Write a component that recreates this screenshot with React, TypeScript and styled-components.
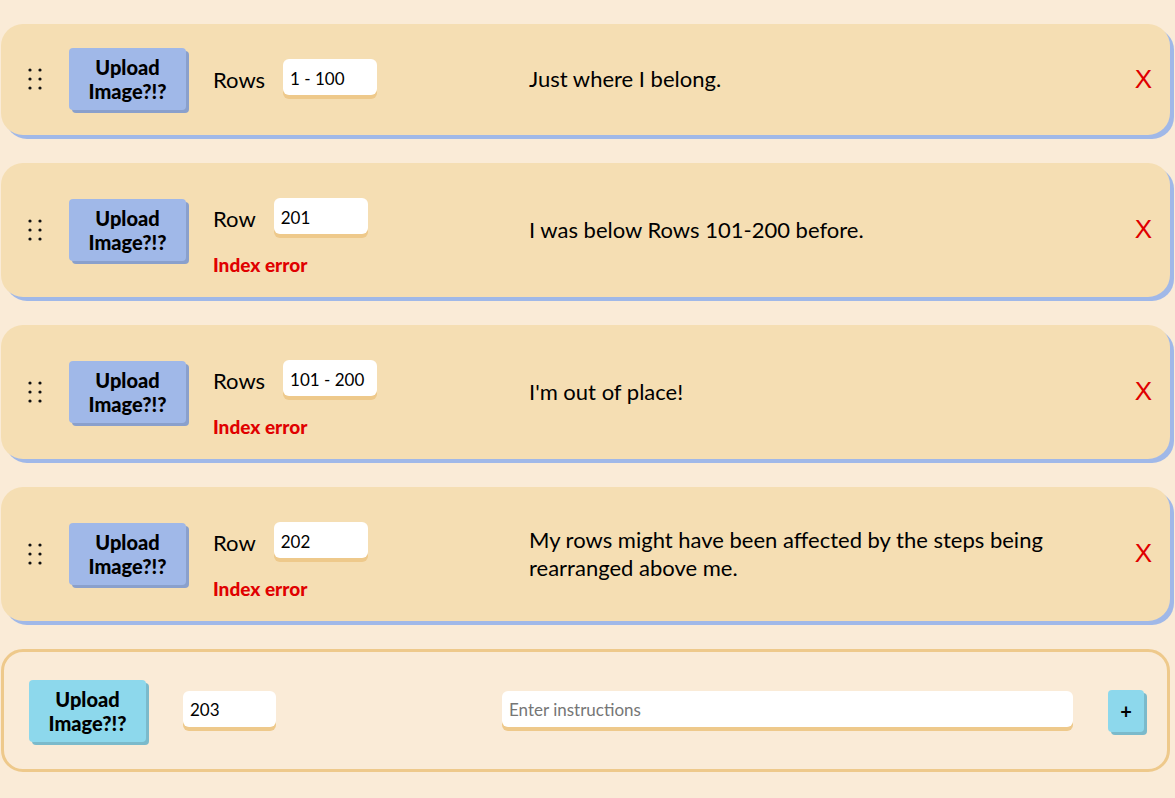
import styled, { createGlobalStyle } from 'styled-components';

const GlobalStyle = createGlobalStyle`
    body {
        margin: 0;
        background: #faebd7;
        font-family: "Lato", "Open Sans", sans-serif;
        color: #000;
    }
`;

const Page = styled.div`
    display: flex;
    flex-direction: column;
    gap: 28px;
    padding: 24px 5px 25px 1px;
`;

const StepCard = styled.div`
    display: flex;
    align-items: center;
    padding: 24px 18px 25px 27px;
    background: #f5deb3;
    border-radius: 22px;
    box-shadow: 4px 4px 0 #a0b8e8;
`;

const Handle = styled.svg`
    flex: none;
    width: 14px;
    height: 22px;
`;

const UploadButton = styled.button<{ $tone: 'blue' | 'cyan' }>`
    flex: none;
    width: 117px;
    height: 62px;
    margin-left: ${(p) => (p.$tone === 'blue' ? '27px' : '0')};
    border: none;
    border-radius: 4px;
    background: ${(p) => (p.$tone === 'blue' ? '#a0b8e8' : '#8dd8ec')};
    box-shadow: 3px 3px 0 ${(p) => (p.$tone === 'blue' ? '#8aa0cc' : '#7bbacb')};
    font-family: "Lato", sans-serif;
    font-weight: 900;
    font-size: 20px;
    line-height: 24px;
    color: #000;
    padding: 0;
`;

const RowGroup = styled.div<{ $withError: boolean }>`
    flex: none;
    width: 316px;
    margin-left: 27px;
    padding-top: ${(p) => (p.$withError ? '11px' : '0')};
    display: flex;
    flex-direction: column;
`;

const FieldLine = styled.div`
    display: flex;
    align-items: center;
`;

const RowLabel = styled.span`
    font-size: 22px;
    margin-right: 18px;
`;

const TextBox = styled.input<{ $width: number }>`
    box-sizing: border-box;
    width: ${(p) => p.$width}px;
    height: 36px;
    margin-bottom: 4px;
    padding: 2px 7px 0;
    border: none;
    border-radius: 6px;
    background: #fff;
    box-shadow: 0 4px 0 #eec98b;
    font-family: "Lato", sans-serif;
    font-size: 17px;
    color: #000;
    outline: none;

    &::placeholder {
        color: #767676;
    }
`;

const ErrorText = styled.div`
    margin: 17px 0 -3px;
    color: #e00000;
    font-weight: 900;
    font-size: 19px;
    line-height: 20px;
`;

const Description = styled.p`
    margin: 0;
    width: 540px;
    font-size: 22px;
    line-height: 28px;
`;

const DeleteButton = styled.button`
    margin-left: auto;
    padding: 0;
    border: none;
    background: none;
    color: #e00000;
    font-family: "Liberation Sans", Arial, sans-serif;
    font-size: 26px;
`;

const NewStepForm = styled.div`
    display: flex;
    align-items: center;
    height: 117px;
    padding: 0 23px 0 25px;
    border: 3px solid #eec98b;
    border-radius: 22px;
`;

const RowSlot = styled.div`
    flex: none;
    width: 319px;
    margin-left: 37px;
`;

const InstructionSlot = styled.div`
    flex: 1;
    display: flex;
    margin-right: 35px;
`;

const AddButton = styled.button`
    flex: none;
    width: 36px;
    height: 42px;
    border: none;
    border-radius: 4px;
    background: #8dd8ec;
    box-shadow: 3px 3px 0 #7bbacb;
    font-family: "Lato", sans-serif;
    font-weight: 700;
    font-size: 20px;
    color: #000;
    padding: 0;
`;

const steps = [
    { label: 'Rows', value: '1 - 100', error: false, text: 'Just where I belong.' },
    { label: 'Row', value: '201', error: true, text: 'I was below Rows 101-200 before.' },
    { label: 'Rows', value: '101 - 200', error: true, text: "I'm out of place!" },
    {
        label: 'Row',
        value: '202',
        error: true,
        text: 'My rows might have been affected by the steps being rearranged above me.',
    },
];

function GripDots() {
    return (
        <Handle viewBox="0 0 14 22">
            {[2, 12].map((cx) =>
                [2, 11, 20].map((cy) => <circle key={`${cx}-${cy}`} cx={cx} cy={cy} r={1.6} fill="#111" />)
            )}
        </Handle>
    );
}

export default function App() {
    return (
        <>
            <GlobalStyle />
            <Page>
                {steps.map((s, i) => (
                    <StepCard key={i}>
                        <GripDots />
                        <UploadButton $tone="blue">
                            Upload
                            <br />
                            Image?!?
                        </UploadButton>
                        <RowGroup $withError={s.error}>
                            <FieldLine>
                                <RowLabel>{s.label}</RowLabel>
                                <TextBox $width={94} defaultValue={s.value} />
                            </FieldLine>
                            {s.error && <ErrorText>Index error</ErrorText>}
                        </RowGroup>
                        <Description>{s.text}</Description>
                        <DeleteButton>X</DeleteButton>
                    </StepCard>
                ))}
                <NewStepForm>
                    <UploadButton $tone="cyan">
                        Upload
                        <br />
                        Image?!?
                    </UploadButton>
                    <RowSlot>
                        <TextBox $width={93} defaultValue="203" />
                    </RowSlot>
                    <InstructionSlot>
                        <TextBox $width={571} placeholder="Enter instructions" />
                    </InstructionSlot>
                    <AddButton>+</AddButton>
                </NewStepForm>
            </Page>
        </>
    );
}
